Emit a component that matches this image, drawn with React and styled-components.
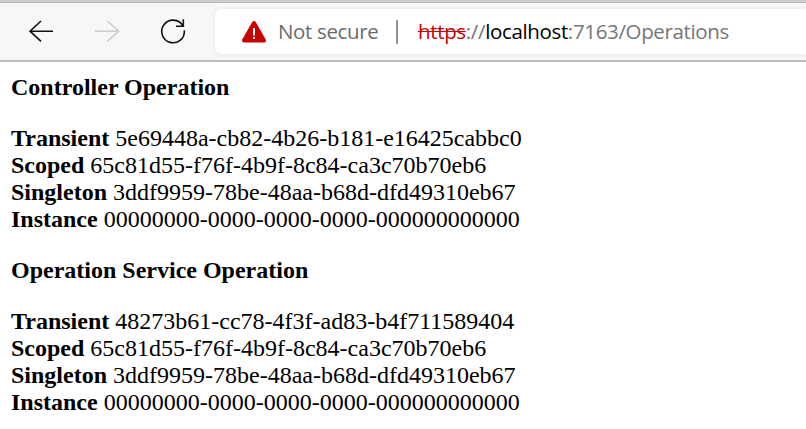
import React from "react";
import styled, { createGlobalStyle } from "styled-components";

const GlobalStyle = createGlobalStyle`
  body { margin: 0; background: #fff; }
`;
const Toolbar = styled.header`
  box-sizing: border-box;
  display: flex;
  align-items: flex-end;
  height: 62px;
  background: #f7f7f7;
  border-top: 2px solid #cccccc;
  border-bottom: 2px solid #bebebe;
  box-shadow: inset 0 1px 0 #b8b8b8;
  overflow: hidden;
`;
const NavIcons = styled.nav`
  display: flex;
  width: 215px;
  height: 57px;
  flex: none;
`;
const AddressBar = styled.div`
  box-sizing: border-box;
  flex: 1;
  display: flex;
  align-items: center;
  height: 45px;
  margin-bottom: 6px;
  padding-left: 26px;
  background: #fff;
  border-radius: 6px 0 0 6px;
  box-shadow: 0 0 5px rgba(0, 0, 0, 0.09);
  font: 20.5px/45px "Open Sans", "Noto Sans", sans-serif;
  letter-spacing: -0.35px;
  color: #767676;
  white-space: nowrap;
`;
const Status = styled.span`
  width: 118px;
  margin-left: 11px;
  color: #6b6b6b;
`;
const Divider = styled.span`
  width: 2px;
  height: 24px;
  background: #929292;
  margin-right: 20px;
`;
const Scheme = styled.span`
  color: #c80000;
  text-decoration: line-through;
  text-decoration-thickness: 1px;
`;
const Host = styled.span`
  color: #000;
`;
const Page = styled.main`
  padding: 12px 11px 0;
  font: 24px/27px "Liberation Serif", serif;
  color: #000;
`;
const Heading = styled.h4`
  margin: 0 0 24px;
  font-size: 24px;
  line-height: 27px;
`;
const Group = styled.section`
  & + & {
    margin-top: 24px;
  }
`;
const Row = styled.div`
  height: 27px;
  white-space: nowrap;
`;

const groups = [
  { title: "Controller Operation", transient: "5e69448a-cb82-4b26-b181-e16425cabbc0" },
  { title: "Operation Service Operation", transient: "48273b61-cc78-4f3f-ad83-b4f711589404" },
];

export default function App() {
  return (
    <>
      <GlobalStyle />
      <Toolbar>
        <NavIcons>
          <svg width="215" height="57" viewBox="0 3 215 57" fill="none" strokeWidth="1.6">
            <path stroke="#111" d="M53 31.2H30M41 21L30 31.2l11 10.2" />
            <path stroke="#ccc" d="M95 31.2h23.5M107.5 21l11 10.2-11 10.2" />
            <path stroke="#111" d="M182.6 25.4A11.3 11.3 0 1 0 184.3 30.3M183.3 19.3v6.9h-7.3" />
          </svg>
        </NavIcons>
        <AddressBar>
          <svg width="26" height="24" viewBox="0 0 26 24">
            <path fill="#c80000" stroke="#c80000" strokeWidth="4" strokeLinejoin="round" d="M13 3.1L23 20.6H3z" />
            <path stroke="#fff" strokeWidth="2" d="M13 8v7.5M13 17v2" />
          </svg>
          <Status>Not secure</Status>
          <Divider />
          <span><Scheme>https</Scheme>://<Host>localhost</Host>:7163/Operations</span>
        </AddressBar>
      </Toolbar>
      <Page>
        {groups.map((group) => (
          <Group key={group.title}>
            <Heading>{group.title}</Heading>
            <Row><b>Transient</b> {group.transient}</Row>
            <Row><b>Scoped</b> 65c81d55-f76f-4b9f-8c84-ca3c70b70eb6</Row>
            <Row><b>Singleton</b> 3ddf9959-78be-48aa-b68d-dfd49310eb67</Row>
            <Row><b>Instance</b> 00000000-0000-0000-0000-000000000000</Row>
          </Group>
        ))}
      </Page>
    </>
  );
}
